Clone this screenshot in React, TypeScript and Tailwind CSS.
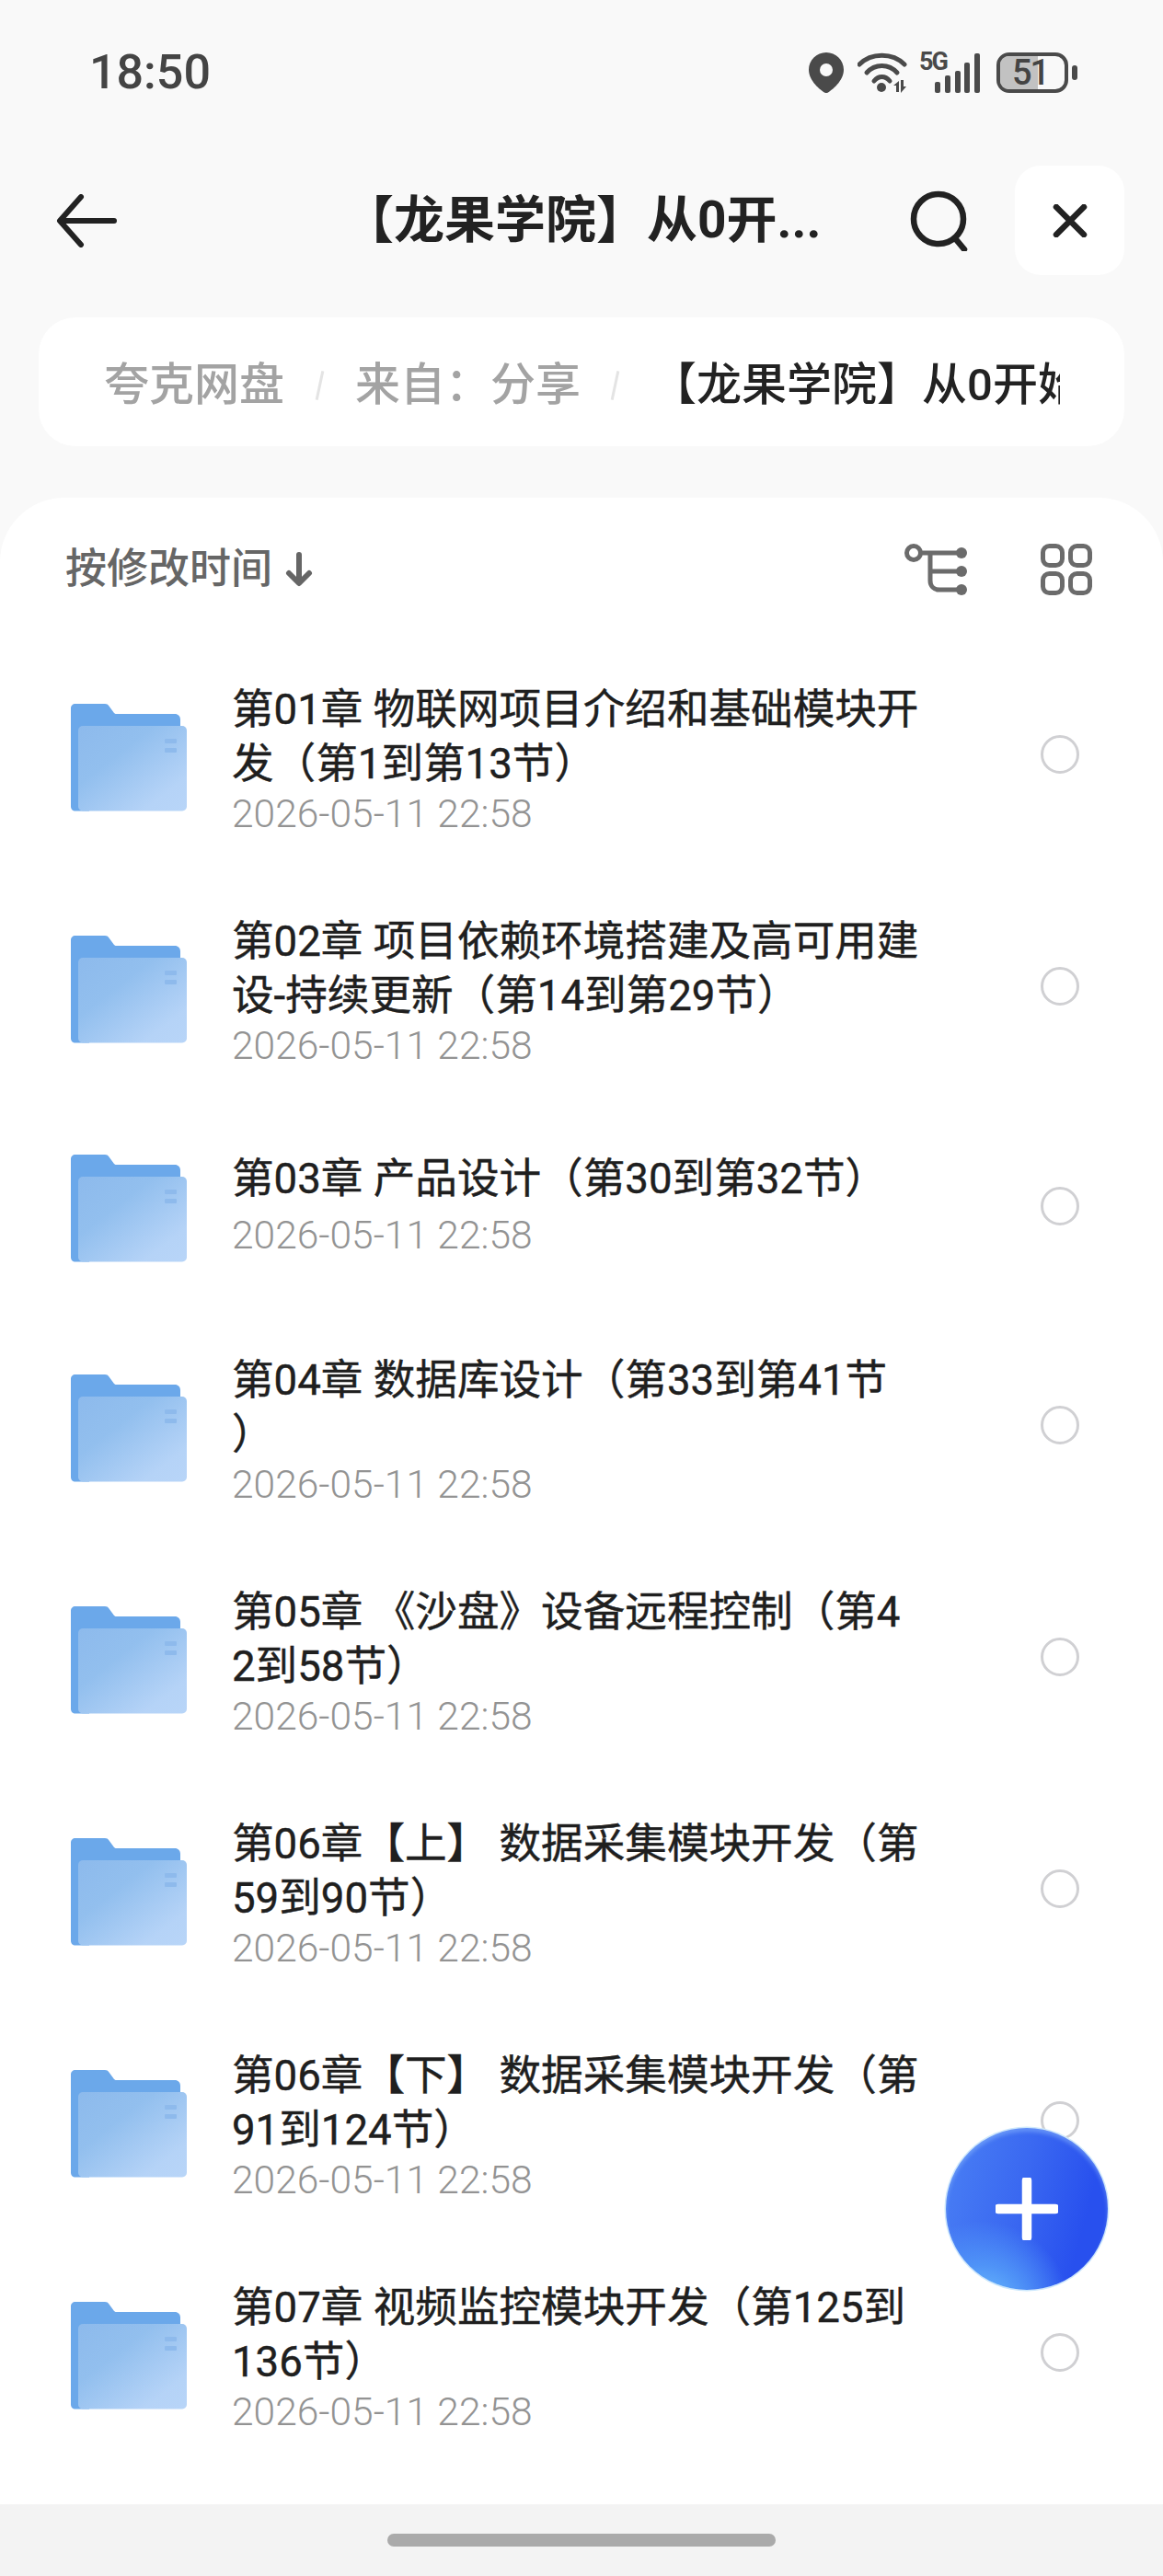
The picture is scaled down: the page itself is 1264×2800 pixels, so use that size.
const CJK = "font-['Roboto','Noto_Sans_CJK_SC',sans-serif]";

type Entry = {
  lines: string[];
};

const entries: Entry[] = [
  { lines: ["第01章 物联网项目介绍和基础模块开", "发（第1到第13节）"] },
  { lines: ["第02章 项目依赖环境搭建及高可用建", "设-持续更新（第14到第29节）"] },
  { lines: ["第03章 产品设计（第30到第32节）"] },
  { lines: ["第04章 数据库设计（第33到第41节", "）"] },
  { lines: ["第05章 《沙盘》设备远程控制（第4", "2到58节）"] },
  { lines: ["第06章【上】 数据采集模块开发（第", "59到90节）"] },
  { lines: ["第06章【下】 数据采集模块开发（第", "91到124节）"] },
  { lines: ["第07章 视频监控模块开发（第125到", "136节）"] },
];

function StatusIcons() {
  return (
    <div className="flex items-center">
      <svg width="38" height="44" viewBox="0 0 38 44" className="mr-[15px]">
        <path
          fillRule="evenodd"
          fill="#4a4a4a"
          d="M19 0C8.5 0 0 8.3 0 18.7 0 31 13 41 17 43.4c1.3.8 2.7.8 4 0C25 41 38 31 38 18.7 38 8.3 29.5 0 19 0Zm0 12a7 7 0 1 1 0 14 7 7 0 0 1 0-14Z"
        />
      </svg>
      <svg width="56" height="44" viewBox="0 0 56 44" className="mr-[27px]">
        <g fill="none" stroke="#4a4a4a" strokeWidth="5" strokeLinecap="round">
          <path d="M2 13C15 0 38 0 51 13" />
          <path d="M10 22C19 12 34 12 43 22" />
          <path d="M18 31C23 25 30 25 35 31" />
        </g>
        <circle cx="26" cy="38" r="5" fill="#4a4a4a" />
        <path fill="#4a4a4a" d="M45 31v12h-3v-7h-3ZM47 30h3v7h3l-6 7Z" />
      </svg>
      <div className="relative mr-[18px] h-[44px] w-[50px]">
        <span className="absolute left-[-16px] top-[-3px] font-['Roboto',sans-serif] text-[27px] font-bold leading-[27px] tracking-[-2px] text-[#4a4a4a]">
          5G
        </span>
        <svg width="50" height="44" viewBox="0 0 50 44" className="absolute left-0 top-0">
          <g fill="#4a4a4a">
            <rect x="1" y="32" width="6" height="12" rx="2" />
            <rect x="12" y="25" width="6" height="19" rx="2" />
            <rect x="23" y="20" width="6" height="24" rx="2" />
            <rect x="33" y="11" width="6" height="33" rx="2" />
            <rect x="44" y="1" width="6" height="43" rx="2" />
          </g>
        </svg>
      </div>
      <div className="relative h-[44px] w-[78px] rounded-[14px] border-[4px] border-[#4a4a4a]">
        <div className="h-full w-[41px] rounded-l-[9px] bg-[#c2c2c2]" />
        <span className="absolute left-[13px] top-[-4px] font-['Roboto',sans-serif] text-[38px] font-medium leading-[44px] tracking-[-2px] text-[#444]">
          51
        </span>
      </div>
      <div className="ml-[4px] h-[16px] w-[6px] rounded-full bg-[#4a4a4a]" />
    </div>
  );
}

function Folder() {
  return (
    <svg width="126" height="117" viewBox="0 0 126 117" className="mt-[6px] mr-[1px] shrink-0">
      <defs>
        <linearGradient id="folderFront" x1="0" y1="0" x2="1" y2="1">
          <stop offset="0" stopColor="#8dbaec" />
          <stop offset="0.35" stopColor="#92bfee" />
          <stop offset="0.8" stopColor="#b5d3f7" />
          <stop offset="1" stopColor="#b8d5f8" />
        </linearGradient>
      </defs>
      <path
        fill="#6ba8ea"
        d="M5 0H37C39 0 40.500 .8 41.500 2.500L47 10C48 11 49 11 50 11H113C116.500 11 119 13.500 119 17V30H20V116.500H5C2 116.500 0 114.500 0 111.500V5C0 2 2 0 5 0Z"
      />
      <rect x="8" y="24" width="118" height="92.500" rx="5" fill="url(#folderFront)" />
      <rect x="102" y="38" width="13" height="5" rx="1" fill="#8ebaec" />
      <rect x="102" y="48" width="13" height="5" rx="1" fill="#8ebaec" />
    </svg>
  );
}

function Row({ entry }: { entry: Entry }) {
  const isSingle = entry.lines.length === 1;

  return (
    <div className={`flex items-center pl-[77px] pr-[91px] ${isSingle ? "h-[225px]" : "h-[252px]"}`}>
      <Folder />
      <div className={`ml-[48px] flex-1 ${isSingle ? "" : "mt-[12px]"}`}>
        <div className={`${CJK} text-[45.6px] leading-[59px] text-[#1f1f1f] [-webkit-text-stroke:0.45px_#1f1f1f]`}>
          {entry.lines.map((line) => (
            <div className="whitespace-nowrap" key={line}>
              {line}
            </div>
          ))}
        </div>
        <div className={`font-['Roboto',sans-serif] text-[42.5px] font-light leading-[53px] text-[#939393] ${isSingle ? "mt-[5px]" : "mt-[-2px]"}`}>
          2026-05-11 22:58
        </div>
      </div>
      <div className="h-[42px] w-[42px] shrink-0 rounded-full border-[3.500px] border-[#d0d0d3]" />
    </div>
  );
}

export default function App() {
  return (
    <div className="relative flex h-[2800px] w-[1264px] flex-col overflow-hidden bg-[#f9f9f9]">
      <div className="mb-[22px] flex h-[158px] items-center justify-between pl-[97px] pr-[93px]">
        <span className="font-['Roboto',sans-serif] text-[52px] font-medium text-[#444]">18:50</span>
        <StatusIcons />
      </div>

      <div className="flex h-[119px] items-center pl-[61px] pr-[42px]">
        <svg width="66" height="58" viewBox="0 0 66 58" className="shrink-0">
          <path
            d="M27 3 4 29l23 26M5 29h58"
            fill="none"
            stroke="#222"
            strokeWidth="6"
            strokeLinecap="round"
            strokeLinejoin="round"
          />
        </svg>
        <div className={`${CJK} ml-[246px] w-[615px] shrink-0 whitespace-nowrap text-[55px] font-bold text-[#222]`}>
          【龙果学院】从0开...
        </div>
        <svg width="66" height="66" viewBox="0 0 66 66" className="shrink-0">
          <circle cx="32" cy="31" r="27" fill="none" stroke="#222" strokeWidth="6.500" />
          <path d="m50 52 10 12" stroke="#222" strokeWidth="6.500" strokeLinecap="round" />
        </svg>
        <div className="ml-[49px] flex h-[119px] w-[119px] shrink-0 items-center justify-center rounded-[28px] bg-white">
          <svg width="38" height="36" viewBox="0 0 38 36">
            <path d="M4 3l30 30M34 3 4 33" stroke="#222" strokeWidth="6.500" strokeLinecap="round" />
          </svg>
        </div>
      </div>

      <div className={`${CJK} mx-[42px] mt-[46px] flex h-[140px] items-center overflow-hidden rounded-[40px] bg-white pl-[71px] pt-[7px] text-[49px] font-medium`}>
        <span className="whitespace-nowrap text-[#a3a3a3]">夸克网盘</span>
        <span className="ml-[37px] mr-[37px] h-[32px] w-[3px] rotate-[12deg] bg-[#e4e4e4]" />
        <span className="whitespace-nowrap text-[#a3a3a3]">来自：分享</span>
        <span className="ml-[36px] mr-[38px] h-[32px] w-[3px] rotate-[12deg] bg-[#e4e4e4]" />
        <span className="w-[444px] shrink-0 overflow-hidden whitespace-nowrap text-[#222]">
          【龙果学院】从0开始
        </span>
      </div>

      <div className="mt-[56px] flex h-[2181px] flex-col rounded-t-[70px] bg-white">
        <div className="flex h-[153px] shrink-0 items-center pl-[71px] pr-[77px] pt-[2px]">
          <span className={`${CJK} text-[45px] font-medium text-[#666]`}>按修改时间</span>
          <svg width="34" height="38" viewBox="0 0 34 38" className="ml-[12px]">
            <path
              d="M17 3v30M6 23l11 11 11-11"
              fill="none"
              stroke="#666"
              strokeWidth="6"
              strokeLinecap="round"
              strokeLinejoin="round"
            />
          </svg>
          <svg width="68" height="56" viewBox="0 0 68 56" className="ml-auto">
            <g fill="none" stroke="#6b6b6b" strokeWidth="5" strokeLinecap="round">
              <circle cx="10" cy="10" r="7.500" />
              <path d="M18 10h44M28 10v30c0 6 4 10 10 10h24M28 30h34" />
            </g>
            <circle cx="62" cy="10" r="6" fill="#6b6b6b" />
            <circle cx="62" cy="30" r="6" fill="#6b6b6b" />
            <circle cx="62" cy="50" r="6" fill="#6b6b6b" />
          </svg>
          <svg width="56" height="56" viewBox="0 0 56 56" className="ml-[80px]">
            <g fill="none" stroke="#6b6b6b" strokeWidth="5">
              <rect x="2.500" y="2.500" width="21" height="21" rx="7" />
              <rect x="32.500" y="2.500" width="21" height="21" rx="7" />
              <rect x="2.500" y="32.500" width="21" height="21" rx="7" />
              <rect x="32.500" y="32.500" width="21" height="21" rx="7" />
            </g>
          </svg>
        </div>
        {entries.map((entry) => (
          <Row entry={entry} key={entry.lines[0]} />
        ))}
      </div>

      <div className="flex h-[78px] items-start justify-center bg-[#f3f3f3] pt-[32px]">
        <div className="h-[14px] w-[422px] rounded-full bg-[#aaaaaa]" />
      </div>

      <div className="absolute bottom-[311px] right-[60px] flex h-[176px] w-[176px] items-center justify-center rounded-full bg-[radial-gradient(circle_at_22%_112%,#72c6fd_0%,#4f93f7_20%,transparent_40%),linear-gradient(105deg,#4a80f4_0%,#3a68f1_45%,#2850ee_80%)] shadow-[0_0_0_1.500px_#cde8fc,inset_0_4px_4px_rgba(150,195,255,0.45)]">
        <svg width="68" height="68" viewBox="0 0 68 68">
          <path d="M34 3v62M3 34h62" stroke="#fff" strokeWidth="10.500" strokeLinecap="round" />
        </svg>
      </div>
    </div>
  );
}
